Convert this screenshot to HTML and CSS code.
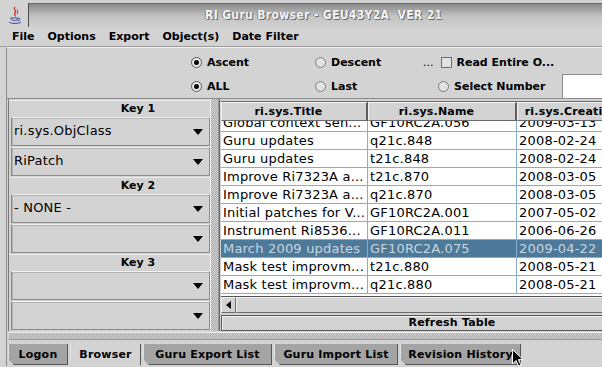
FILE: index.html
```html
<!DOCTYPE html>
<html lang="en">
<head>
    <meta charset="UTF-8">
    <title>RI Guru Browser</title>
    <link rel="stylesheet" href="styles.css">
</head>
<body>
    <div class="titlebar">
        <svg class="app-icon" viewBox="0 0 14 18" width="14" height="18">
            <path d="M7 1 C4.5 3 9 4.5 7 7 C5.5 8.5 8 9 7 10.5" fill="none" stroke="#c8321e" stroke-width="1.3"/>
            <path d="M9.5 3.5 C8.5 5 10.5 6 9.3 8" fill="none" stroke="#c8321e" stroke-width="1"/>
            <path d="M2.5 12 H10.5 M3 12 C3 15.5 10 15.5 10 12 M10 12.6 C12.8 12.2 12.6 15 9.4 14.6 M1 16.2 C4 18 10 18 13 16.2" fill="none" stroke="#3a4ea8" stroke-width="1"/>
        </svg>
        <div class="title-strip">RI Guru Browser - GEU43Y2A&nbsp; VER 21</div>
    </div>

    <div class="menubar">
        <span>File</span>
        <span>Options</span>
        <span>Export</span>
        <span>Object(s)</span>
        <span>Date Filter</span>
    </div>

    <div class="frame">
        <div class="options">
            <label class="opt"><span class="radio on"></span>Ascent</label>
            <label class="opt"><span class="radio"></span>Descent</label>
            <label class="opt opt-read"><span class="dots">...</span><span class="check"></span>Read Entire O...</label>
            <label class="opt"><span class="radio on"></span>ALL</label>
            <label class="opt"><span class="radio"></span>Last</label>
            <label class="opt opt-select"><span class="radio"></span>Select Number<span class="numfield"></span></label>
        </div>

        <div class="split">
            <div class="keys">
                <div class="key-head">Key 1</div>
                <div class="combo">ri.sys.ObjClass<span class="arrow"></span></div>
                <div class="combo">RiPatch<span class="arrow"></span></div>
                <div class="key-head">Key 2</div>
                <div class="combo">- NONE -<span class="arrow"></span></div>
                <div class="combo"><span class="arrow"></span></div>
                <div class="key-head">Key 3</div>
                <div class="combo"><span class="arrow"></span></div>
                <div class="combo"><span class="arrow"></span></div>
            </div>

            <div class="divider-v"></div>

            <div class="tablepane">
                <div class="thead">
                    <div class="th c1">ri.sys.Title</div>
                    <div class="th c2">ri.sys.Name</div>
                    <div class="th c3 th-last">ri.sys.Creation</div>
                </div>
                <div class="tbody">
                    <div class="rows">
                        <div class="tr"><div class="td c1">Global context sen...</div><div class="td c2">GF10RC2A.056</div><div class="td c3">2009-03-13</div></div>
                        <div class="tr"><div class="td c1">Guru updates</div><div class="td c2">q21c.848</div><div class="td c3">2008-02-24</div></div>
                        <div class="tr"><div class="td c1">Guru updates</div><div class="td c2">t21c.848</div><div class="td c3">2008-02-24</div></div>
                        <div class="tr"><div class="td c1">Improve Ri7323A a...</div><div class="td c2">t21c.870</div><div class="td c3">2008-03-05</div></div>
                        <div class="tr"><div class="td c1">Improve Ri7323A a...</div><div class="td c2">q21c.870</div><div class="td c3">2008-03-05</div></div>
                        <div class="tr"><div class="td c1">Initial patches for V...</div><div class="td c2">GF10RC2A.001</div><div class="td c3">2007-05-02</div></div>
                        <div class="tr"><div class="td c1">Instrument Ri8536...</div><div class="td c2">GF10RC2A.011</div><div class="td c3">2006-06-26</div></div>
                        <div class="tr selected"><div class="td c1">March 2009 updates</div><div class="td c2">GF10RC2A.075</div><div class="td c3">2009-04-22</div></div>
                        <div class="tr"><div class="td c1">Mask test improvm...</div><div class="td c2">t21c.880</div><div class="td c3">2008-05-21</div></div>
                        <div class="tr"><div class="td c1">Mask test improvm...</div><div class="td c2">q21c.880</div><div class="td c3">2008-05-21</div></div>
                    </div>
                </div>
                <div class="hscroll">
                    <div class="scroll-btn"><span class="arrow-left"></span></div>
                    <div class="scroll-thumb"></div>
                </div>
                <div class="refresh">Refresh Table</div>
            </div>
        </div>

        <div class="divider-h"></div>

        <div class="tabs">
            <div class="tab t-logon">Logon</div>
            <div class="tab t-browser active">Browser</div>
            <div class="tab t-export">Guru Export List</div>
            <div class="tab t-import">Guru Import List</div>
            <div class="tab t-history">Revision History</div>
        </div>
    </div>

    <svg class="cursor" viewBox="0 0 12 18" width="12" height="18">
        <path d="M0.5 0.5 L0.5 15 L4 11.5 L6.8 17.2 L9 16.2 L6.3 10.6 L11 10.6 Z" fill="#000" stroke="#fff" stroke-width="1"/>
    </svg>
</body>
</html>
```

FILE: styles.css
```css
* {
    box-sizing: border-box;
}
body {
    margin: 0;
    width: 602px;
    height: 367px;
    overflow: hidden;
    position: relative;
    background: #d3d3d3;
    font-family: "DejaVu Sans", sans-serif;
    color: #000;
}

/* title bar */
.titlebar {
    display: flex;
    align-items: center;
    height: 27px;
    padding-top: 3px;
}
.app-icon {
    margin: 0 6px 0 8px;
    flex: none;
}
.title-strip {
    flex: 1;
    height: 24px;
    border-left: 1px solid #4a4a4a;
    border-top: 1px solid #6a6a6a;
    background: linear-gradient(#8a8a8a, #c4c4c4 55%, #d0d0d0);
    padding-left: 176px;
    line-height: 22px;
    font-family: "DejaVu Sans Condensed", "DejaVu Sans", sans-serif;
    font-weight: bold;
    font-size: 12px;
    letter-spacing: 0.35px;
    color: #f4f4f4;
    text-shadow: 1px 1px 0 #6a6a6a, -1px 0 0 #8a8a8a;
    white-space: nowrap;
}

/* menu */
.menubar {
    display: flex;
    gap: 13px;
    height: 20px;
    padding-left: 12px;
    border-bottom: 1px solid #9c9c9c;
    font-size: 11px;
    font-weight: bold;
    line-height: 20px;
}

.frame {
    margin-left: 6px;
    border-left: 1px solid #8c8c8c;
    border-top: 1px solid #f2f2f2;
}

/* options strip */
.options {
    display: grid;
    grid-template-columns: 124px 103px 1fr;
    grid-auto-rows: 24px;
    height: 51px;
    padding: 2px 0 0 184px;
    border-bottom: 1px solid #8a8a8a;
    font-size: 11px;
    font-weight: bold;
}
.opt {
    display: flex;
    align-items: center;
    white-space: nowrap;
}
.radio {
    position: relative;
    width: 11px;
    height: 11px;
    margin-right: 5px;
    border-radius: 50%;
    border: 1px solid #7a7a7a;
    background: #e2e2e2;
}
.radio.on {
    border-color: #555;
    background: #eaeaea;
}
.radio.on::after {
    content: "";
    position: absolute;
    left: 2px;
    top: 2px;
    width: 5px;
    height: 5px;
    border-radius: 50%;
    background: #000;
}
.opt-read {
    padding-left: 5px;
}
.dots {
    font-weight: normal;
    margin-right: 7px;
}
.check {
    width: 11px;
    height: 11px;
    margin-right: 5px;
    border: 1px solid #6e6e6e;
    background: #e2e2e2;
}
.opt-select {
    padding-left: 20px;
}
.numfield {
    flex: none;
    width: 60px;
    height: 24px;
    margin-left: 17px;
    background: #fff;
    border-top: 1px solid #8a8a8a;
    border-left: 1px solid #8a8a8a;
}

/* main split */
.split {
    display: flex;
    height: 232px;
}
.keys {
    width: 202px;
    margin-left: 1px;
    padding-top: 1px;
    border-left: 1px solid #7a7a7a;
    flex: none;
}
.key-head {
    height: 17px;
    padding-left: 57px;
    text-align: center;
    font-size: 11px;
    font-weight: bold;
    line-height: 16px;
    border-top: 1px solid #ececec;
}
.combo {
    position: relative;
    height: 29px;
    margin: 0 0 1px 2px;
    padding-left: 2px;
    border: 1px solid #8a8a8a;
    border-top-color: #f0f0f0;
    box-shadow: inset 1px 1px 0 #b4b4b4;
    font-size: 13px;
    letter-spacing: 0.2px;
    line-height: 26px;
}
.arrow {
    position: absolute;
    right: 6px;
    top: 11px;
    border-left: 5px solid transparent;
    border-right: 5px solid transparent;
    border-top: 6px solid #000;
}

.divider-v {
    width: 9px;
    flex: none;
    border-left: 1px solid #efefef;
    border-right: 1px solid #9a9a9a;
    background: repeating-conic-gradient(#a8a8a8 0 25%, #d6d6d6 0 50%) 0 0 / 2px 2px;
}
.divider-h {
    height: 8px;
    margin: 1px 0 0 2px;
    border-top: 1px solid #efefef;
    border-bottom: 1px solid #9a9a9a;
    background: repeating-conic-gradient(#a8a8a8 0 25%, #d6d6d6 0 50%) 0 0 / 2px 2px;
}

/* table */
.tablepane {
    flex: 1;
    overflow: hidden;
    padding: 2px 0 0 1px;
    border-left: 1px solid #6a6a6a;
}
.thead {
    display: flex;
    height: 20px;
    border-top: 1px solid #6a6a6a;
}
.th {
    flex: none;
    height: 19px;
    padding-right: 11px;
    border-top: 1px solid #f4f4f4;
    border-left: 1px solid #f4f4f4;
    border-bottom: 1px solid #6a6a6a;
    border-right: 2px solid #5e5e5e;
    text-align: center;
    font-size: 11px;
    font-weight: bold;
    letter-spacing: 0.2px;
    line-height: 17px;
    white-space: nowrap;
    overflow: hidden;
}
.th.th-last {
    width: 110px;
    padding-right: 0;
}
.c1 {
    width: 147px;
}
.c2 {
    width: 149px;
}
.c3 {
    width: 200px;
}
.tbody {
    height: 175px;
    overflow: hidden;
    background: #fff;
}
.rows {
    margin-top: -7px;
}
.tr {
    display: flex;
    height: 18px;
    border-bottom: 1px solid #86aed0;
}
.td {
    flex: none;
    padding-left: 2px;
    border-right: 1px solid #86aed0;
    font-size: 13px;
    letter-spacing: 0.2px;
    line-height: 17px;
    white-space: nowrap;
    overflow: hidden;
}
.tr.selected {
    background: #4d7a9a;
    color: #c9d5de;
}
.hscroll {
    display: flex;
    height: 17px;
    border-top: 1px solid #555;
}
.scroll-btn {
    width: 15px;
    display: flex;
    align-items: center;
    justify-content: center;
    border-top: 1px solid #f2f2f2;
    border-left: 1px solid #f2f2f2;
    border-right: 1px solid #6a6a6a;
    border-bottom: 1px solid #6a6a6a;
}
.arrow-left {
    border-top: 4px solid transparent;
    border-bottom: 4px solid transparent;
    border-right: 5px solid #000;
}
.scroll-thumb {
    flex: 1;
    border-top: 1px solid #f2f2f2;
    border-left: 1px solid #f2f2f2;
    border-bottom: 1px solid #6a6a6a;
}
.refresh {
    width: 462px;
    height: 16px;
    margin-top: 2px;
    border: 1px solid #555;
    box-shadow: inset 1px 1px 0 #f2f2f2;
    text-align: center;
    font-size: 11px;
    font-weight: bold;
    letter-spacing: 0.2px;
    line-height: 14px;
}

/* tabs */
.tabs {
    display: flex;
    gap: 2px;
    height: 24px;
    margin: 2px 0 0 1px;
}
.tab {
    height: 21px;
    margin-top: 2px;
    background: #a4a4a4;
    border-left: 1px solid #e2e2e2;
    border-right: 1px solid #555;
    border-bottom: 1px solid #555;
    clip-path: polygon(0 0, 100% 0, 100% 100%, 6px 100%, 0 calc(100% - 6px));
    text-align: center;
    font-size: 11px;
    font-weight: bold;
    letter-spacing: 0.2px;
    line-height: 21px;
    white-space: nowrap;
}
.tab.active {
    background: #d3d3d3;
    border-bottom: none;
}
.t-logon {
    width: 60px;
}
.t-browser {
    width: 71px;
}
.t-export {
    width: 129px;
}
.t-import {
    width: 124px;
}
.t-history {
    width: 121px;
}

.cursor {
    position: absolute;
    left: 512px;
    top: 349px;
}
```
